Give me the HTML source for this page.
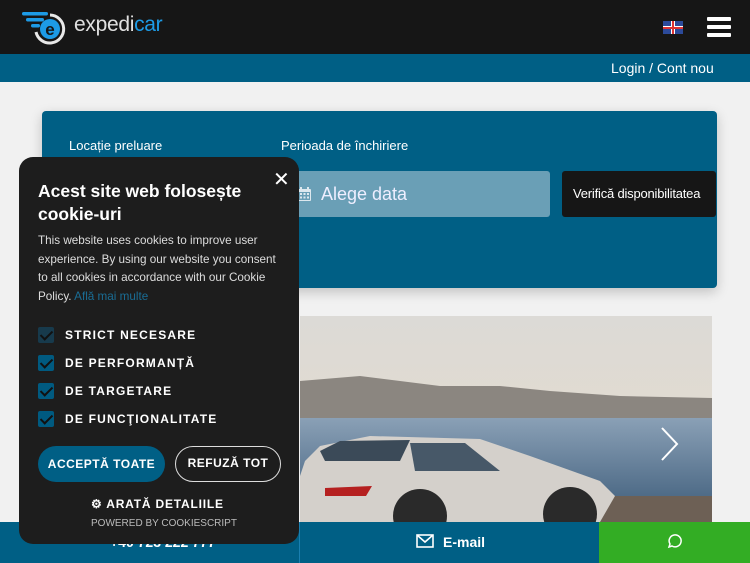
<!DOCTYPE html>
<html><head><meta charset="utf-8"><style>
*{margin:0;padding:0;box-sizing:border-box}
body{width:750px;height:563px;overflow:hidden;background:#f1f1f1;font-family:"Liberation Sans",sans-serif;position:relative}
.hdr{position:absolute;left:0;top:0;width:750px;height:54px;background:#161616}
.band{position:absolute;left:0;top:54px;width:750px;height:28px;background:#005f85;color:#fff;font-size:14px}
.panel{position:absolute;left:42px;top:111px;width:675px;height:177px;background:#005f85;border-radius:4px;box-shadow:0 4px 12px rgba(0,0,0,.2);color:#fff}
.lab{position:absolute;font-size:13px;top:27px}
.inp{position:absolute;left:238px;top:60px;width:270px;height:46px;background:#6a9fb6;border-radius:3px;color:#eef;font-size:18px;padding:13px 0 0 41px}
.btn{position:absolute;left:520px;top:60px;width:154px;height:46px;background:#161616;border-radius:3px;font-size:13px;padding:15px 0 0 11px;letter-spacing:-.2px}
.img{position:absolute;left:300px;top:316px;width:412px;height:206px;overflow:hidden}
.bot{position:absolute;top:522px;height:41px;color:#fff;font-weight:bold;font-size:14px}
.ck{position:absolute;left:19px;top:157px;width:280px;height:387px;background:#1d1d1d;border-radius:14px;color:#fff}
.ck h1{position:absolute;left:19px;top:23px;font-size:17.5px;line-height:23px;font-weight:bold}
.ck p{position:absolute;left:19px;top:75px;width:238px;font-size:11.7px;line-height:18.7px;color:#ddd}
.cb{position:absolute;left:19px;width:16px;height:16px;background:#005a80;border-radius:2px}
.cb::after{content:"";position:absolute;left:5px;top:1px;width:5px;height:10px;border:solid #111;border-width:0 2px 2px 0;transform:rotate(45deg)}
.cl{position:absolute;left:46px;font-size:12px;font-weight:bold;letter-spacing:1.2px}
.pill{position:absolute;top:289px;height:36px;border-radius:18px;font-size:12px;font-weight:bold;letter-spacing:.5px;text-align:center;line-height:36px}
</style></head><body>
<div class="hdr">
<svg style="position:absolute;left:20px;top:10px" width="52" height="36" viewBox="0 0 52 36">
<rect x="2" y="2" width="26" height="3.5" rx="1.7" fill="#1d9be6"/><rect x="6" y="8" width="18" height="3.5" rx="1.7" fill="#1d9be6"/><rect x="11" y="14" width="9" height="3.5" rx="1.7" fill="#1d9be6"/>
<path d="M30 5 A14 14 0 1 1 16 22" fill="none" stroke="#e8e8e8" stroke-width="3"/>
<circle cx="30" cy="19" r="10" fill="#1d9be6"/>
<text x="30" y="25" font-size="17" font-weight="bold" fill="#161616" text-anchor="middle" font-family="Liberation Sans">e</text></svg>
<div style="position:absolute;left:74px;top:13px;font-size:21px;color:#e0e0e0;letter-spacing:-.3px">expedi<span style="color:#1d9be6">car</span></div>
<div style="position:absolute;left:663px;top:21px;width:20px;height:13px;background:#2c4a9a;overflow:hidden">
<div style="position:absolute;left:-3px;top:5px;width:26px;height:3px;background:#fff"></div><div style="position:absolute;left:8px;top:0;width:4px;height:13px;background:#fff"></div>
<div style="position:absolute;left:-3px;top:5.5px;width:26px;height:2px;background:#d33"></div><div style="position:absolute;left:9px;top:0;width:2px;height:13px;background:#d33"></div></div>
<div style="position:absolute;left:707px;top:17px;width:24px;height:4px;background:#fff;border-radius:1px"></div>
<div style="position:absolute;left:707px;top:25px;width:24px;height:4px;background:#fff;border-radius:1px"></div>
<div style="position:absolute;left:707px;top:33px;width:24px;height:4px;background:#fff;border-radius:1px"></div>
</div>
<div class="band"><span style="position:absolute;left:611px;top:6px">Login / Cont nou</span></div>
<div class="panel">
<div class="lab" style="left:27px">Locație preluare</div>
<div class="lab" style="left:239px">Perioada de închiriere</div>
<div class="inp"><svg style="position:absolute;left:18px;top:16px" width="13" height="14" viewBox="0 0 13 14"><rect x="0" y="2" width="13" height="12" rx="1" fill="#dde8ee"/><rect x="2" y="0" width="2" height="3" fill="#dde8ee"/><rect x="9" y="0" width="2" height="3" fill="#dde8ee"/><rect x="1" y="5" width="11" height="8" fill="#6a9fb6"/><g fill="#dde8ee"><rect x="2" y="6" width="2" height="2"/><rect x="5.5" y="6" width="2" height="2"/><rect x="9" y="6" width="2" height="2"/><rect x="2" y="9.5" width="2" height="2"/><rect x="5.5" y="9.5" width="2" height="2"/><rect x="9" y="9.5" width="2" height="2"/></g></svg>Alege data</div>
<div class="btn">Verifică disponibilitatea</div>
</div>
<div class="img">
<svg width="412" height="206" viewBox="0 0 412 206" style="position:absolute;left:0;top:0">
<defs><linearGradient id="s" x1="0" y1="0" x2="0" y2="1"><stop offset="0" stop-color="#dcdad6"/><stop offset="1" stop-color="#e6dccb"/></linearGradient>
<linearGradient id="w" x1="0" y1="0" x2="0" y2="1"><stop offset="0" stop-color="#8aa0b6"/><stop offset="1" stop-color="#4d6a86"/></linearGradient></defs>
<rect width="412" height="206" fill="url(#s)"/>
<path d="M0 65 L60 60 L140 70 L200 70 L250 75 L320 80 L412 82 L412 102 L0 108Z" fill="#8b8680"/>
<rect x="0" y="102" width="412" height="80" fill="url(#w)"/>
<path d="M0 180 L412 180 L412 206 L0 206Z" fill="#6d6055"/>
<path d="M0 160 L5 145 L20 130 L70 120 L180 123 L230 140 L300 165 L315 180 L300 206 L0 206Z" fill="#d4d0cb"/>
<path d="M20 135 L40 125 L110 124 L100 145 L25 145Z" fill="#3b4a58"/>
<path d="M110 127 L165 127 L200 155 L115 155Z" fill="#475868"/>
<circle cx="120" cy="200" r="27" fill="#2a2a2a"/><circle cx="270" cy="198" r="27" fill="#2a2a2a"/>
<path d="M25 172 L72 170 L66 180 L25 180Z" fill="#b52020"/>
<path d="M362 112 L377 128 L362 144" fill="none" stroke="#fff" stroke-width="2"/>
</svg></div>
<div class="bot" style="left:0;width:299px;background:#005f85"><span style="position:absolute;left:110px;top:12px">+40 723 222 777</span></div>
<div class="bot" style="left:299px;width:300px;background:#005f85;border-left:1px solid #1a7fb0">
<svg style="position:absolute;left:116px;top:12px" width="18" height="14" viewBox="0 0 18 14"><rect x="1" y="1" width="16" height="12" fill="none" stroke="#fff" stroke-width="1.6"/><path d="M1 1 L9 8 L17 1" fill="none" stroke="#fff" stroke-width="1.6"/></svg>
<span style="position:absolute;left:143px;top:12px">E-mail</span></div>
<div class="bot" style="left:599px;width:151px;background:#33ad24">
<svg style="position:absolute;left:67px;top:12px" width="16" height="16" viewBox="0 0 16 16"><path d="M3 13 L4 10 A6 6 0 1 1 6 12Z" fill="none" stroke="#fff" stroke-width="1.5"/></svg></div>
<div class="ck">
<div style="position:absolute;left:254px;top:10px;font-size:20px">✕</div>
<h1>Acest site web folosește<br>cookie-uri</h1>
<p>This website uses cookies to improve user experience. By using our website you consent to all cookies in accordance with our Cookie Policy. <span style="color:#1a6d95">Află mai multe</span></p>
<div class="cb" style="top:170px;background:#173a4c"></div><div class="cl" style="top:171px">STRICT NECESARE</div>
<div class="cb" style="top:198px"></div><div class="cl" style="top:199px">DE PERFORMANȚĂ</div>
<div class="cb" style="top:226px"></div><div class="cl" style="top:227px">DE TARGETARE</div>
<div class="cb" style="top:254px"></div><div class="cl" style="top:255px">DE FUNCŢIONALITATE</div>
<div class="pill" style="left:19px;width:127px;background:#005f85">ACCEPTĂ TOATE</div>
<div class="pill" style="left:156px;width:106px;border:1.5px solid #ddd;line-height:33px">REFUZĂ TOT</div>
<div style="position:absolute;left:72px;top:340px;font-size:12px;font-weight:bold;letter-spacing:.8px">⚙ ARATĂ DETALIILE</div>
<div style="position:absolute;left:72px;top:361px;font-size:10px;color:#bbb">POWERED BY COOKIESCRIPT</div>
</div>
</body></html>
